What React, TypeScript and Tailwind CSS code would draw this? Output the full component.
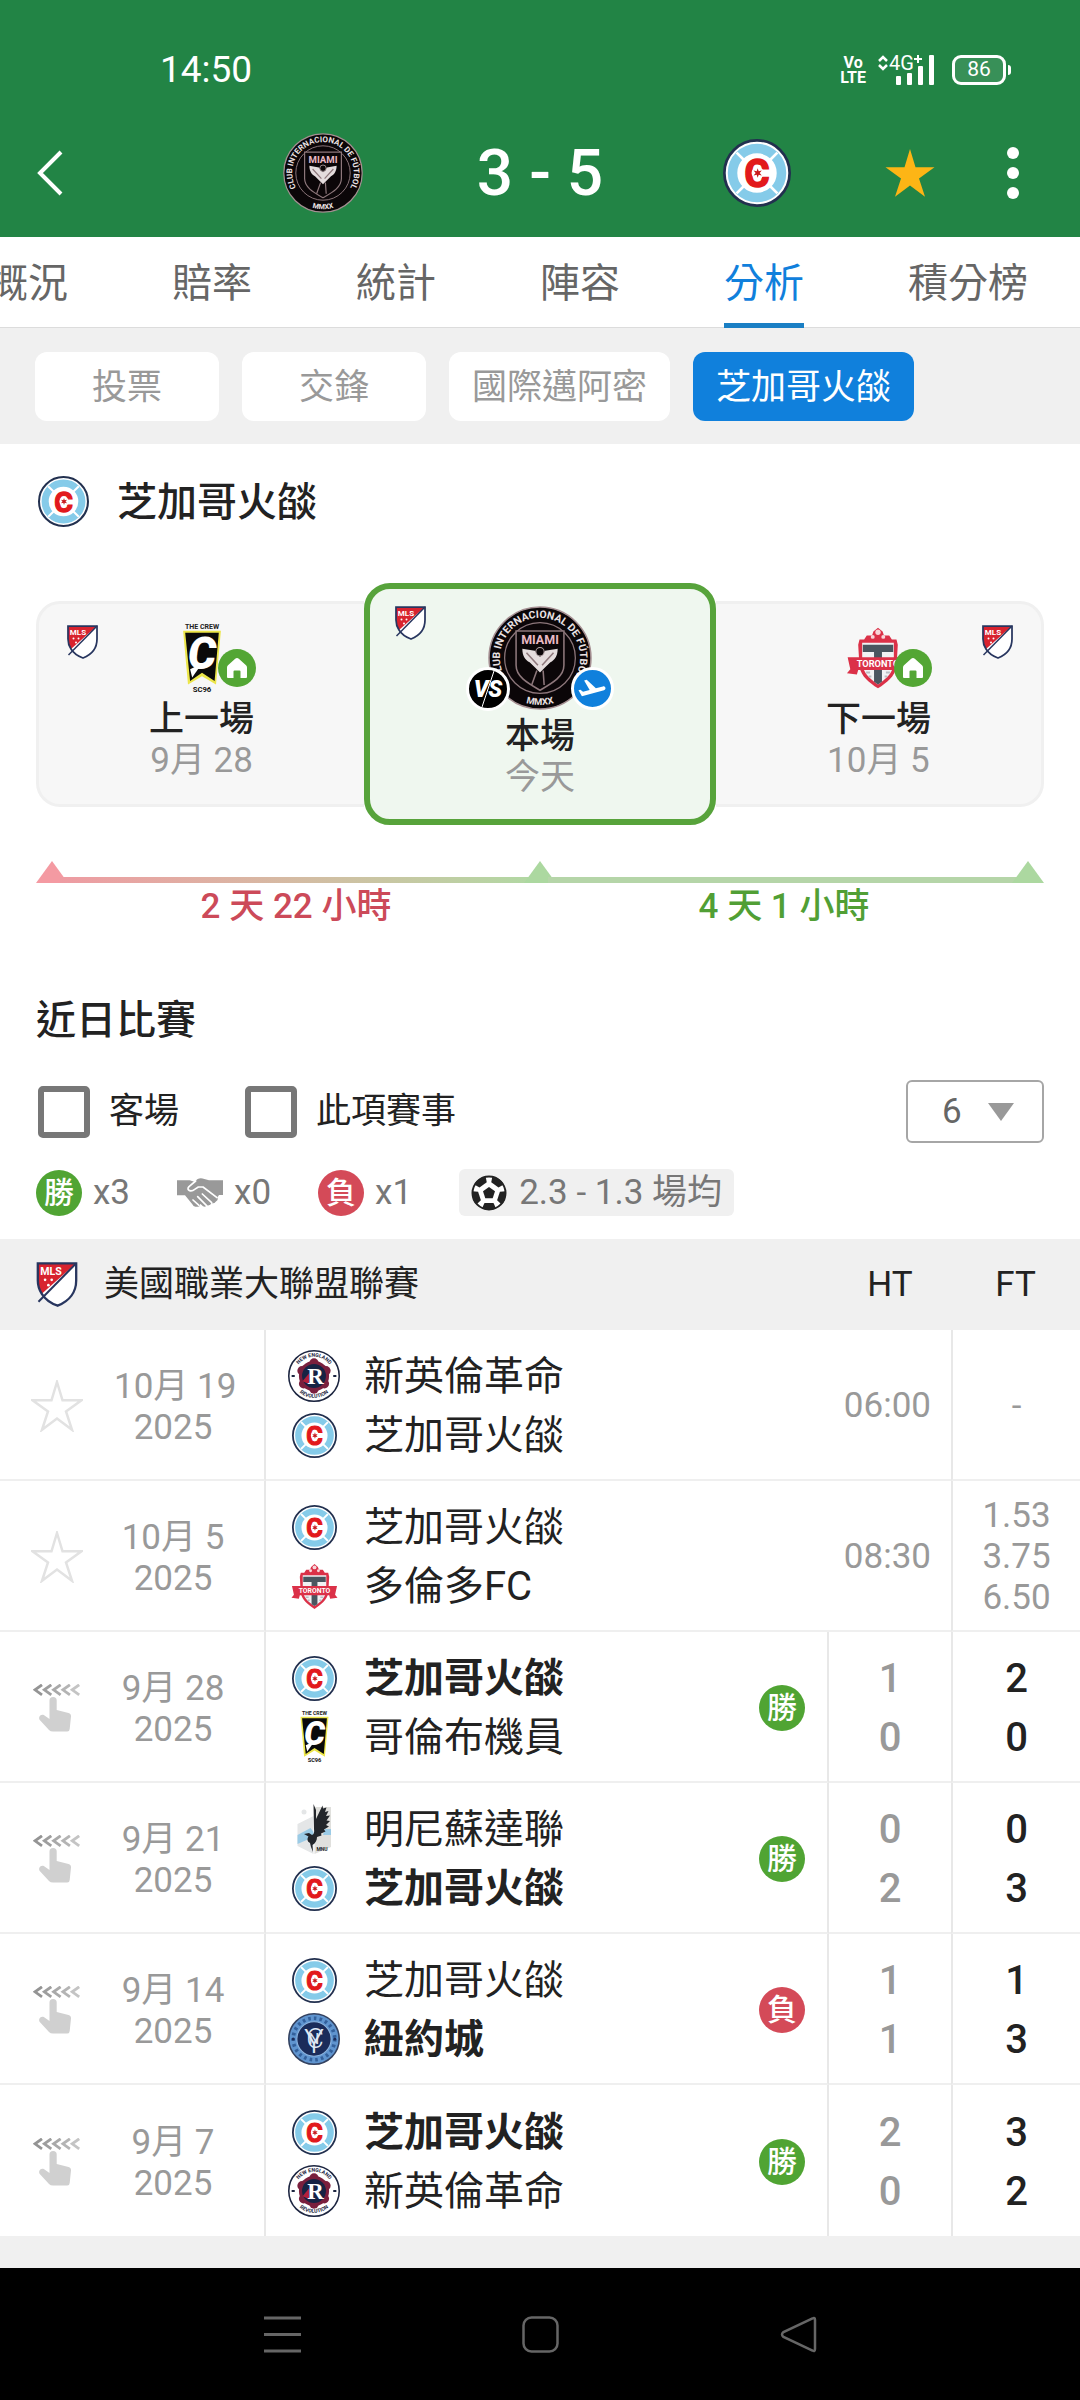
import { useId, useState } from "react";
import type { ComponentType } from "react";
import { clsx } from "clsx";

interface LogoProps {
  className?: string;
}

interface Team {
  name: string;
  Logo: ComponentType<LogoProps>;
  logoClass: string;
}

interface Match {
  day: string;
  year: string;
  home: Team;
  away: Team;
  winner?: "home" | "away";
  result?: "win" | "loss";
  kickoff?: string;
  odds?: string[];
  ht?: [number, number];
  ft?: [number, number];
}

function MiamiLogo({ className }: LogoProps) {
  const id = useId();
  return (
    <svg viewBox="0 0 100 100" className={className} aria-hidden="true">
      <defs>
        <path id={`${id}t`} d="M20 74a38.5 38.5 0 1 1 60 0" />
        <path id={`${id}b`} d="M28 89.5a45 45 0 0 0 44 0" />
      </defs>
      <circle cx="50" cy="50" r="49" fill="#0b0608" stroke="#a58f92" strokeWidth="1.5" />
      <circle cx="50" cy="50" r="34" fill="none" stroke="#8d777b" strokeWidth="1.2" />
      <text fontSize="10" fontWeight="700" fill="#eae2e3">
        <textPath href={`#${id}t`} startOffset="50%" textAnchor="middle">CLUB INTERNACIONAL DE FÚTBOL</textPath>
      </text>
      <text fontSize="9" fontWeight="700" fill="#eae2e3">
        <textPath href={`#${id}b`} startOffset="50%" textAnchor="middle">MMXX</textPath>
      </text>
      <path d="M27 24h46v33c0 11-11 17-23 24-12-7-23-13-23-24z" fill="#0b0608" stroke="#8d777b" strokeWidth="1.5" />
      <text x="50" y="37" fontSize="12" fontWeight="700" textAnchor="middle" fill="#e9b9c4">MIAMI</text>
      <path d="M33 41l12 2 5 6 5-6 12-2c0 7-3 11-7 13l-5 5-5 5-5-5-5-5c-4-2-7-6-7-13z" fill="#e4dcdd" />
      <circle cx="50" cy="44" r="4" fill="#0b0608" stroke="#b7a6a9" />
      <path d="M47 62l-5 14M53 62l1 14M37 45l11 12M63 45L52 57" stroke="#8d777b" strokeWidth="1.5" fill="none" />
    </svg>
  );
}

function ChicagoLogo({ className }: LogoProps) {
  return (
    <svg viewBox="0 0 100 100" className={className} aria-hidden="true">
      <circle cx="50" cy="50" r="48" fill="#fff" stroke="#22304f" strokeWidth="4" />
      <circle cx="50" cy="50" r="36" fill="none" stroke="#85cbe9" strokeWidth="14" />
      <path d="M20 20l12 12M80 20L68 32M20 80l12-12M80 80L68 68" stroke="#fff" strokeWidth="4" />
      <text x="50" y="70" fontSize="56" fontWeight="700" textAnchor="middle" fill="#e2191c" stroke="#e2191c" strokeWidth="2.5" strokeLinejoin="miter">C</text>
      <circle cx="51" cy="50" r="9" fill="#fff" />
      <path d="M51 43l1.5 4.500 4.500-1-3 3.500 3 3.500-4.500-1L51 57l-1.500-4.500-4.500 1 3-3.500-3-3.500 4.500 1z" fill="#c8181c" />
    </svg>
  );
}

function ColumbusLogo({ className }: LogoProps) {
  return (
    <svg viewBox="0 0 56 100" className={clsx("overflow-visible", className)} aria-hidden="true">
      <text x="28" y="8" fontSize="10" fontWeight="700" textAnchor="middle" fill="#222">THE CREW</text>
      <path d="M1 11h54l-7 77-20-12L8 88z" fill="#ece64a" />
      <path d="M4 14h48l-6 69-18-12-17 12z" fill="#0a0a0a" />
      <text x="28" y="65" fontSize="64" fontWeight="900" fontStyle="italic" textAnchor="middle" fill="#fff">C</text>
      <path d="M11 66l17-8-14 20z" fill="#fff" />
      <text x="28" y="99" fontSize="11" fontWeight="700" textAnchor="middle" fill="#111">SC96</text>
    </svg>
  );
}

function TorontoLogo({ className }: LogoProps) {
  return (
    <svg viewBox="0 0 100 96" className={className} aria-hidden="true">
      <path d="M50 2l7 6 2 6h8l4 6h7l2 8-2 34c-3 14-14 23-28 32-14-9-25-18-28-32l-2-34 2-8h7l4-6h8l2-6z" fill="#db3148" />
      <circle cx="50" cy="9" r="4" fill="#f8d5d9" />
      <circle cx="42" cy="16" r="3" fill="#f8d5d9" />
      <circle cx="58" cy="16" r="3" fill="#f8d5d9" />
      <path d="M26 25h48v32c-2 14-12 23-24 31-12-8-22-17-24-31z" fill="#f1f2f4" />
      <path d="M27 28h46v11H56v45l-6 4-6-4V39H27z" fill="#4a5660" />
      <path d="M4 47h92l-4 18 5 6-15 2-2-7H20l-2 7-15-2 5-6z" fill="#db3148" />
      <text x="50" y="61" fontSize="14" fontWeight="700" textAnchor="middle" fill="#fff">TORONTO</text>
      <path d="M32 70h6M62 70h6M36 76h4M60 76h4" stroke="#b9bec4" strokeWidth="3" />
    </svg>
  );
}

function NewEnglandLogo({ className }: LogoProps) {
  const id = useId();
  return (
    <svg viewBox="0 0 100 100" className={className} aria-hidden="true">
      <defs>
        <path id={`${id}t`} d="M13 50a37 37 0 0 1 74 0" />
        <path id={`${id}b`} d="M7 55a43.5 43.5 0 0 0 86 0" />
      </defs>
      <circle cx="50" cy="50" r="48.5" fill="#fff" stroke="#1c2540" strokeWidth="3" />
      <text fontSize="10" fontWeight="700" fill="#1c2540">
        <textPath href={`#${id}t`} startOffset="50%" textAnchor="middle">NEW ENGLAND</textPath>
      </text>
      <text fontSize="10" fontWeight="700" fill="#1c2540">
        <textPath href={`#${id}b`} startOffset="50%" textAnchor="middle">REVOLUTION</textPath>
      </text>
      <g fill="#7a1f3d">
        <circle cx="50" cy="50" r="29" />
        <circle cx="50" cy="25" r="9" />
        <circle cx="73" cy="40" r="9" />
        <circle cx="27" cy="40" r="9" />
        <circle cx="70" cy="65" r="9" />
        <circle cx="30" cy="65" r="9" />
        <circle cx="50" cy="75" r="9" />
      </g>
      <circle cx="50" cy="50" r="23" fill="#172344" />
      <path d="M28 60l13-16v22z" fill="#b3203c" />
      <text x="53" y="66" fontSize="44" fontWeight="700" textAnchor="middle" fill="#fff" fontFamily="Liberation Serif">R</text>
      <path d="M7 50h6M87 50h6" stroke="#1c2540" strokeWidth="4" />
    </svg>
  );
}

function MinnesotaLogo({ className }: LogoProps) {
  return (
    <svg viewBox="0 0 68 100" className={className} aria-hidden="true">
      <path d="M1 40l32-16v76L1 84z" fill="#e4e6e7" />
      <path d="M35 24V6h33v80L35 100z" fill="#e0e0dd" />
      <path d="M1 62l26-14 6 8v10L1 80z" fill="#9bcbe6" />
      <path d="M56 50h12v12H52z" fill="#9bcbe6" />
      <circle cx="14" cy="16" r="5" fill="#e4e6e7" />
      <path
        d="M33 0l5 12v18l13-27 1 6 7-2-3 9 7-2-5 10 8-1-7 10 7 1-8 8 6 3-10 6 3 4-9 4 1 4-9 3c0 7-3 12-9 16l1 14-4-10-2-8c-6-3-6-9-3-13l-9-5 10-2 6 4c4-2 5-5 4-12z"
        fill="#23262b"
      />
      <text x="50" y="94" fontSize="10" fontWeight="700" textAnchor="middle" fill="#23262b">MNU</text>
    </svg>
  );
}

function NewYorkLogo({ className }: LogoProps) {
  return (
    <svg viewBox="0 0 100 100" className={className} aria-hidden="true">
      <circle cx="50" cy="50" r="48.5" fill="#5f94cf" stroke="#33415f" strokeWidth="3" />
      <circle cx="50" cy="50" r="40" fill="none" stroke="#33609b" strokeWidth="7" strokeDasharray="5 6" />
      <circle cx="50" cy="50" r="33" fill="#1b2c5a" stroke="#8db4de" strokeWidth="2" />
      <g fill="#dfe8f4" textAnchor="middle">
        <text x="52" y="67" fontSize="52" fontWeight="300">C</text>
        <text x="50" y="59" fontSize="28" fontWeight="400">N</text>
        <text x="50" y="76" fontSize="64" fontWeight="300">Y</text>
      </g>
      <circle cx="10" cy="50" r="3" fill="#1b2c5a" />
      <circle cx="90" cy="50" r="3" fill="#1b2c5a" />
    </svg>
  );
}

function MlsLogo({ className }: LogoProps) {
  return (
    <svg viewBox="0 0 62 68" className={className} aria-hidden="true">
      <path d="M2 2h58v26c0 17-10 31-28 38C21 62 13 56 8 48 4 42 2 36 2 28z" fill="#fff" />
      <path d="M2 2h58L8 48C4 42 2 36 2 28z" fill="#d8232f" />
      <path d="M60 2L3 60" stroke="#28365f" strokeWidth="3" />
      <path d="M2 2h58v26c0 17-10 31-28 38C21 62 13 56 8 48 4 42 2 36 2 28z" fill="none" stroke="#28365f" strokeWidth="3.5" />
      <text x="22" y="20" fontSize="16" fontWeight="700" textAnchor="middle" fill="#fff">MLS</text>
      <g fill="#fff">
        <circle cx="13" cy="27" r="2" />
        <circle cx="23" cy="27" r="2" />
        <circle cx="18" cy="35" r="2" />
      </g>
    </svg>
  );
}

function StarIcon({ className, filled }: { className?: string; filled?: boolean }) {
  return (
    <svg viewBox="0 0 52 52" className={className} aria-hidden="true">
      <path
        d="M26 2l5.500 18.300H50.500L35 31.500l6 18.300L26 38.500 11 49.800l6-18.300L1.500 20.300h19z"
        fill={filled ? "currentColor" : "none"}
        stroke="currentColor"
        strokeWidth={filled ? 0 : 2.5}
      />
    </svg>
  );
}

function SwipeIcon({ className }: { className?: string }) {
  return (
    <svg viewBox="0 0 48 48" className={className} aria-hidden="true">
      {[1, 0.9, 0.8, 0.7, 0.55].map((opacity, i) => (
        <path key={i} d={`M${9 + i * 9.3} 0.8l-7 5 7 5`} fill="none" stroke="#949494" strokeWidth="2.8" opacity={opacity} />
      ))}
      <path
        d="M16.5 16.6a3.6 3.6 0 0 1 7.2 0V26l11.8 3q2.700.8 2.500 3.600l-1.300 12.400q-.2 2.500-2.500 2.500H20q-2.500 0-4-1.500L6.800 36c-2-3 1-6.500 4-5l5.700 4z"
        fill="#d0d0d0"
      />
    </svg>
  );
}

function HandshakeIcon({ className }: { className?: string }) {
  return (
    <svg viewBox="0 0 138 90" className={className} aria-hidden="true">
      <path
        d="M0 7h38l14 4 10-8q9-5 20 0l14 4h42v44h-12l-4 6q3 10-6 14-4 7-13 4-2 9-13 7-4 6-12 3l-8-8q-2 12-13 9-8 1-11-7L24 52H0z"
        fill="currentColor"
      />
      <g fill="none" stroke="#fff" strokeWidth="5" strokeLinecap="round" strokeLinejoin="round">
        <path d="M56 9L36 26q-7 8 2 12 8 2 15-4l11-7h14l42 32" />
        <path d="M76 48l28 26M62 56l26 26M48 66l18 16" />
      </g>
    </svg>
  );
}

function BallIcon({ className }: { className?: string }) {
  return (
    <svg viewBox="0 0 36 36" className={className} aria-hidden="true">
      <circle cx="18" cy="18" r="16.5" fill="#fff" stroke="#222" strokeWidth="2" />
      <path d="M18 12l6 4.300-2.300 7h-7.400l-2.300-7z" fill="#222" />
      {[0, 72, 144, 216, 288].map((angle) => (
        <path key={angle} d="M11 33.500l2.500-5.500h9l2.500 5.500q-7 3-14 0z" fill="#222" transform={`rotate(${angle} 18 18)`} />
      ))}
    </svg>
  );
}

function HomeBadge() {
  return (
    <span className="absolute top-[26px] left-9 flex size-[38px] items-center justify-center rounded-full bg-[#53a634]">
      <svg viewBox="0 0 20 20" className="size-5" aria-hidden="true">
        <path d="M10 0q1 0 1.800.7l7.200 6.500q1 .9 1 2.300V19q0 1-1 1h-5.500v-6.500q0-1-1-1h-5q-1 0-1 1V20H1q-1 0-1-1V9.500q0-1.400 1-2.300L8.200.7Q9 0 10 0z" fill="#fff" />
      </svg>
    </span>
  );
}

const CHICAGO: Team = { name: "芝加哥火燄", Logo: ChicagoLogo, logoClass: "size-[45px]" };
const TORONTO: Team = { name: "多倫多FC", Logo: TorontoLogo, logoClass: "h-[47px] w-[49px]" };
const COLUMBUS: Team = { name: "哥倫布機員", Logo: ColumbusLogo, logoClass: "h-[52px] w-[29px]" };
const NEW_ENGLAND: Team = { name: "新英倫革命", Logo: NewEnglandLogo, logoClass: "size-[52px]" };
const MINNESOTA: Team = { name: "明尼蘇達聯", Logo: MinnesotaLogo, logoClass: "h-[50px] w-[34px]" };
const NEW_YORK: Team = { name: "紐約城", Logo: NewYorkLogo, logoClass: "size-[52px]" };

const MATCHES: Match[] = [
  { day: "10月 19", year: "2025", home: NEW_ENGLAND, away: CHICAGO, kickoff: "06:00", odds: ["-"] },
  { day: "10月 5", year: "2025", home: CHICAGO, away: TORONTO, kickoff: "08:30", odds: ["1.53", "3.75", "6.50"] },
  { day: "9月 28", year: "2025", home: CHICAGO, away: COLUMBUS, winner: "home", result: "win", ht: [1, 0], ft: [2, 0] },
  { day: "9月 21", year: "2025", home: MINNESOTA, away: CHICAGO, winner: "away", result: "win", ht: [0, 2], ft: [0, 3] },
  { day: "9月 14", year: "2025", home: CHICAGO, away: NEW_YORK, winner: "away", result: "loss", ht: [1, 1], ft: [1, 3] },
  { day: "9月 7", year: "2025", home: CHICAGO, away: NEW_ENGLAND, winner: "home", result: "win", ht: [2, 0], ft: [3, 2] },
];

const TABS = ["概況", "賠率", "統計", "陣容", "分析", "積分榜"];
const FILTERS = ["投票", "交鋒", "國際邁阿密", "芝加哥火燄"];

function StatusBar() {
  return (
    <div className="flex h-[133px] items-center justify-between pt-1.5 pr-[69px] pl-[160px] text-white">
      <span className="text-[37px] leading-none">14:50</span>
      <div className="flex items-center">
        <span className="mr-3 text-center text-[16px] leading-[15px] font-bold">
          Vo
          <br />
          LTE
        </span>
        <svg viewBox="0 0 58 32" className="mr-4 h-8 w-[58px] overflow-visible" aria-hidden="true">
          <path d="M1 7l4-4 4 4M1 11l4 4 4-4" fill="none" stroke="#fff" strokeWidth="2.5" />
          <text x="11" y="16" fontSize="20" fill="#fff">4G</text>
          <path d="M36 5h8M40 1v8" stroke="#fff" strokeWidth="2" />
          <g fill="#fff">
            <rect x="18" y="22" width="5" height="9" rx="1" />
            <rect x="29" y="19" width="5" height="12" rx="1" />
            <rect x="40" y="12" width="5" height="19" rx="1" />
            <rect x="51" y="1" width="5" height="30" rx="1" />
          </g>
        </svg>
        <span className="flex h-[30px] w-[54px] items-center justify-center rounded-[9px] border-3 border-white bg-white/10 text-[21px] leading-none">86</span>
        <span className="ml-0.5 h-[10px] w-[3px] rounded-r bg-white" />
      </div>
    </div>
  );
}

function Header() {
  return (
    <header className="bg-[#228445] pb-6">
      <StatusBar />
      <div className="grid h-20 grid-cols-[1fr_auto_1fr] items-center text-white">
        <button aria-label="返回" className="ml-9 w-7">
          <svg viewBox="0 0 28 46" className="h-[46px] w-7" aria-hidden="true">
            <path d="M25 2L4 23l21 21" fill="none" stroke="currentColor" strokeWidth="4" />
          </svg>
        </button>
        <div className="flex items-center gap-[114px]">
          <MiamiLogo className="size-20" />
          <h1 className="pt-0.5 text-[64px] leading-none font-medium">3 - 5</h1>
          <div className="flex w-20 justify-center">
            <ChicagoLogo className="size-[68px]" />
          </div>
        </div>
        <div className="flex items-center justify-end gap-[71px] pr-[61px]">
          <button aria-label="收藏" className="text-[#fdb515]">
            <StarIcon filled className="size-[52px]" />
          </button>
          <button aria-label="更多" className="flex flex-col gap-2">
            <span className="size-3 rounded-full bg-white" />
            <span className="size-3 rounded-full bg-white" />
            <span className="size-3 rounded-full bg-white" />
          </button>
        </div>
      </div>
    </header>
  );
}

function MatchTabs() {
  const [active, setActive] = useState("分析");
  return (
    <nav className="h-[91px] overflow-x-clip border-b border-[#dcdcdc] bg-white">
      <div className="-ml-3 flex h-[92px] gap-[104px]">
        {TABS.map((tab) => (
          <button
            key={tab}
            onClick={() => setActive(tab)}
            className={clsx(
              "shrink-0 border-b-6 pt-2 text-[40px] leading-none",
              tab === active ? "border-[#1a7fc4] text-[#1080dc]" : "border-transparent text-[#666]",
            )}
          >
            {tab}
          </button>
        ))}
      </div>
    </nav>
  );
}

function FilterChips() {
  const [active, setActive] = useState("芝加哥火燄");
  return (
    <div className="flex gap-[23px] bg-[#f0f0f0] px-[35px] pt-6 pb-[23px]">
      {FILTERS.map((label) => (
        <button
          key={label}
          onClick={() => setActive(label)}
          className={clsx(
            "h-[69px] min-w-[184px] rounded-xl px-[23px] pt-0.5 text-[35px] leading-none",
            label === active ? "bg-[#1080dc] text-white" : "bg-white text-[#999]",
          )}
        >
          {label}
        </button>
      ))}
    </div>
  );
}

function Schedule() {
  return (
    <div className="mt-14 grid grid-cols-[14fr_15fr_14fr] items-center text-center text-[35px] leading-[41px]">
      <div className="relative rounded-l-[24px] border-3 border-r-0 border-[#f0f0f0] bg-[#f7f7f7] pt-[19px] pb-[23px]">
        <MlsLogo className="absolute top-[21px] left-7 h-[34px] w-[31px]" />
        <div className="relative mx-auto flex h-[70px] w-10 justify-center">
          <ColumbusLogo className="h-[70px] w-10" />
          <HomeBadge />
        </div>
        <div className="mt-1.5 font-medium">上一場</div>
        <div className="text-[#999]">9月 28</div>
      </div>

      <div className="relative rounded-[26px] border-6 border-[#57a33b] bg-[#eff7ef] pt-[17px] pb-[21px]">
        <MlsLogo className="absolute top-[17px] left-[25px] h-[34px] w-[31px]" />
        <div className="relative mx-auto size-[104px]">
          <MiamiLogo className="size-[104px]" />
          <span className="absolute -bottom-px -left-[22px] flex size-[44px] items-center justify-center overflow-hidden rounded-full border-3 border-white bg-black text-[23px] leading-none font-black text-white italic">
            VS
            <svg viewBox="0 0 38 38" className="absolute inset-0 size-full" aria-hidden="true">
              <path d="M25 1L13 37" stroke="#fff" strokeWidth="1" />
            </svg>
          </span>
          <span className="absolute -right-[22px] bottom-0 flex size-[43px] items-center justify-center rounded-full border-3 border-white bg-[#1080dc]">
            <svg viewBox="0 0 24 20" className="w-8 shrink-0" aria-hidden="true">
              <path
                d="M22.07 9.64c-.21-.8-1.04-1.28-1.84-1.06L14.92 10l-6.9-6.43-1.93.51 4.14 7.17-4.97 1.33-1.97-1.54-1.45.39 2.59 4.49L21 11.49c.81-.23 1.28-1.05 1.07-1.85z"
                fill="#fff"
              />
            </svg>
          </span>
        </div>
        <div className="mt-1.5 font-medium">本場</div>
        <div className="text-[#999]">今天</div>
      </div>

      <div className="relative rounded-r-[24px] border-3 border-l-0 border-[#f0f0f0] bg-[#f7f7f7] pt-[19px] pb-[23px]">
        <MlsLogo className="absolute top-[21px] right-7 h-[34px] w-[31px]" />
        <div className="relative mx-auto flex h-[70px] w-10 items-center justify-center">
          <TorontoLogo className="h-[64px] w-[66px] shrink-0" />
          <HomeBadge />
        </div>
        <div className="mt-1.5 font-medium">下一場</div>
        <div className="text-[#999]">10月 5</div>
      </div>
    </div>
  );
}

function Marker({ className }: { className?: string }) {
  return (
    <svg viewBox="0 0 32 22" className={clsx("h-[22px] w-8 shrink-0", className)} aria-hidden="true">
      <path d="M16 0l16 22H0z" fill="currentColor" />
    </svg>
  );
}

function RestTimeline() {
  return (
    <div className="mt-9">
      <div className="flex items-end">
        <Marker className="text-[#f49aa2]" />
        <div className="-mx-2 h-1.5 flex-1 bg-linear-to-r from-[#ee9ba2] to-[#b1d8a3]" />
        <Marker className="text-[#acd8a0]" />
        <div className="-mx-2 h-1.5 flex-1 bg-[#b5d5a8]" />
        <Marker className="text-[#acd8a0]" />
      </div>
      <div className="grid grid-cols-2 px-4 text-center text-[35px] leading-[48px] font-medium">
        <span className="text-[#cc4a59]">2 天 22 小時</span>
        <span className="text-[#519f35]">4 天 1 小時</span>
      </div>
    </div>
  );
}

function Filters() {
  return (
    <div className="mt-[39px] flex items-center text-[35px] leading-none">
      <label className="mr-[66px] ml-0.5 flex items-center gap-[19px]">
        <input type="checkbox" className="size-[52px] appearance-none rounded-[5px] border-6 border-[#777] checked:bg-[#777]" />
        客場
      </label>
      <label className="flex items-center gap-[19px]">
        <input type="checkbox" className="size-[52px] appearance-none rounded-[5px] border-6 border-[#777] checked:bg-[#777]" />
        此項賽事
      </label>
      <div className="relative ml-auto">
        <select aria-label="場數" defaultValue="6" className="h-[63px] w-[138px] appearance-none rounded-md border-2 border-[#a6a6a6] bg-white pl-[34px] text-[#666]">
          <option>6</option>
          <option>10</option>
          <option>20</option>
        </select>
        <svg viewBox="0 0 26 18" className="pointer-events-none absolute top-[23px] right-[30px] h-[18px] w-[26px]" aria-hidden="true">
          <path d="M0 0h26L13 18z" fill="#999" />
        </svg>
      </div>
    </div>
  );
}

function ResultBadge({ result }: { result: "win" | "loss" }) {
  return (
    <span
      className={clsx(
        "flex size-[46px] items-center justify-center rounded-full text-[30px] leading-none font-medium text-white",
        result === "win" ? "bg-[#50a433]" : "bg-[#d44a58]",
      )}
    >
      {result === "win" ? "勝" : "負"}
    </span>
  );
}

function Summary() {
  return (
    <div className="mt-[26px] flex items-center gap-[47px] text-[35px] leading-none text-[#777]">
      <span className="flex items-center gap-[11px]">
        <ResultBadge result="win" />
        x3
      </span>
      <span className="flex items-center gap-[11px]">
        <HandshakeIcon className="h-[30px] w-[46px] text-[#999]" />
        x0
      </span>
      <span className="flex items-center gap-[11px]">
        <ResultBadge result="loss" />
        x1
      </span>
      <span className="flex h-[47px] items-center gap-3 rounded-md bg-[#f0f0f0] px-3">
        <BallIcon className="size-9" />
        2.3 - 1.3 場均
      </span>
    </div>
  );
}

function TeamLine({ team, bold }: { team: Team; bold: boolean }) {
  const { Logo } = team;
  return (
    <div className={clsx("flex h-[59px] items-center text-[40px] leading-none", bold && "font-bold")}>
      <span className="mr-6 flex w-[52px] justify-center">
        <Logo className={team.logoClass} />
      </span>
      <span className="pt-0.5">{team.name}</span>
    </div>
  );
}

function MatchRow({ match }: { match: Match }) {
  const played = match.ft !== undefined;
  return (
    <tr className="h-[151px] last:[&>td]:border-b-0 [&>td]:border-b-2 [&>td]:border-b-[#efefef] [&>td]:pt-0.5">
      <td className="text-center">
        {played ? (
          <SwipeIcon className="mx-auto size-12" />
        ) : (
          <button aria-label="收藏" className="align-middle text-[#e2e2e2]">
            <StarIcon className="size-[52px]" />
          </button>
        )}
      </td>
      <td className="border-r-2 border-r-[#e8e8e8] pr-[32px] text-center leading-[41px] whitespace-nowrap text-[#999]">
        <div className="pt-0.5">{match.day}</div>
        <div>{match.year}</div>
      </td>
      <td colSpan={played ? 1 : 2} className={clsx("pl-[22px]", played ? "border-r-2 border-r-[#e8e8e8] pr-[22px]" : "pr-5")}>
        <div className="flex items-center justify-between">
          <div>
            <TeamLine team={match.home} bold={match.winner === "home"} />
            <TeamLine team={match.away} bold={match.winner === "away"} />
          </div>
          {match.result && <ResultBadge result={match.result} />}
          {match.kickoff && <span className="text-[#999]">{match.kickoff}</span>}
        </div>
      </td>
      {match.ht && (
        <td className="text-center text-[40px] leading-[59px] font-medium text-[#999]">
          {match.ht[0]}
          <br />
          {match.ht[1]}
        </td>
      )}
      <td className={clsx("border-l-2 border-l-[#e8e8e8] text-center", played ? "text-[40px] leading-[59px] font-medium" : "leading-[41px] text-[#999]")}>
        {(match.ft ?? match.odds ?? []).map((value, i) => (
          <div key={i}>{value}</div>
        ))}
      </td>
    </tr>
  );
}

function MatchTable() {
  return (
    <table className="w-full table-fixed border-separate border-spacing-0 bg-white text-[35px] leading-none">
      <colgroup>
        <col className="w-[114px]" />
        <col className="w-[152px]" />
        <col />
        <col className="w-[122px]" />
        <col className="w-[129px]" />
      </colgroup>
      <thead>
        <tr className="h-[91px] bg-[#f0f0f0]">
          <th colSpan={3} className="pl-9 text-left font-normal">
            <span className="flex items-center gap-[26px]">
              <MlsLogo className="h-[45px] w-[42px]" />
              美國職業大聯盟聯賽
            </span>
          </th>
          <th className="font-normal">HT</th>
          <th className="font-normal">FT</th>
        </tr>
      </thead>
      <tbody>
        {MATCHES.map((match) => (
          <MatchRow key={match.day} match={match} />
        ))}
      </tbody>
    </table>
  );
}

function SystemNav() {
  return (
    <div className="flex h-[132px] items-center justify-center gap-[221px] bg-black text-[#666]">
      <button aria-label="最近">
        <svg viewBox="0 0 37 37" className="size-[37px]" fill="none" stroke="currentColor" strokeWidth="3">
          <path d="M0 2h37M0 18.5h37M0 35h37" />
        </svg>
      </button>
      <button aria-label="主頁">
        <svg viewBox="0 0 37 37" className="size-[37px]" fill="none" stroke="currentColor" strokeWidth="2.5">
          <rect x="1.5" y="1.5" width="34" height="34" rx="8" />
        </svg>
      </button>
      <button aria-label="返回">
        <svg viewBox="0 0 37 37" className="size-[37px]" fill="none" stroke="currentColor" strokeWidth="2.5">
          <path d="M32.5 2.5Q35 1 35 4v29q0 3-2.5 1.5L3.5 21q-3-2.5 0-5z" />
        </svg>
      </button>
    </div>
  );
}

export default function App() {
  return (
    <div lang="zh-Hant" className="flex min-h-screen flex-col bg-[#f0f0f0] font-['Roboto','Noto_Sans_CJK_TC',sans-serif] text-[#222]">
      <Header />
      <MatchTabs />
      <FilterChips />
      <main className="grow">
        <section className="bg-white px-9 pt-8 pb-[23px]">
          <h2 className="flex items-center gap-7 pl-0.5 text-[40px] leading-none font-medium">
            <ChicagoLogo className="size-[51px]" />
            <span className="pt-0.5">芝加哥火燄</span>
          </h2>
          <Schedule />
          <RestTimeline />
          <h2 className="mt-[70px] text-[40px] leading-none font-medium">近日比賽</h2>
          <Filters />
          <Summary />
        </section>
        <MatchTable />
      </main>
      <SystemNav />
    </div>
  );
}
